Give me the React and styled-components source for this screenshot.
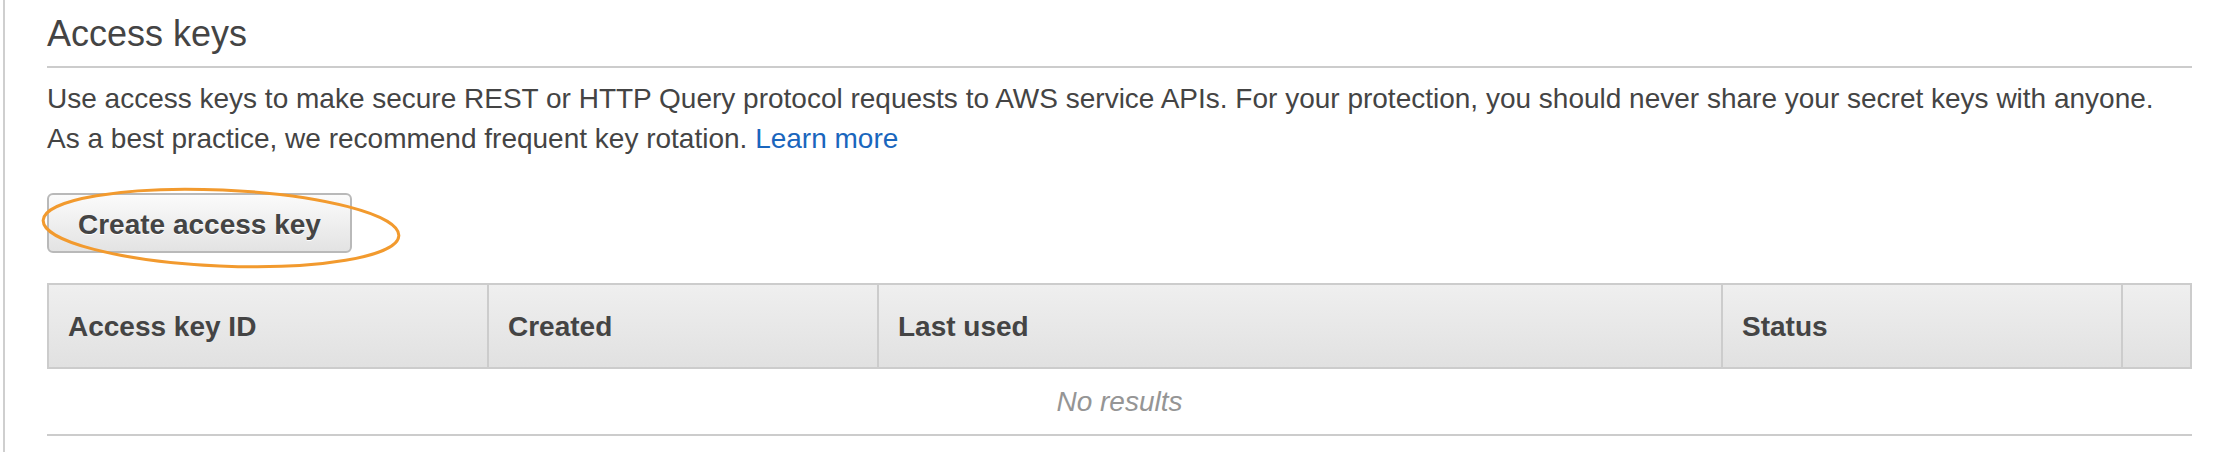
import styled, { createGlobalStyle } from 'styled-components';

const GlobalStyle = createGlobalStyle`
    body {
        margin: 0;
        background: #fff;
        font-family: "Liberation Sans", Arial, Helvetica, sans-serif;
        color: #444;
    }
`;

const columns = ['Access key ID', 'Created', 'Last used', 'Status', ''];

const App = () => {
    return (
    <>
        <GlobalStyle />
        <Page>
            <Heading>Access keys</Heading>
            <Intro>
                Use access keys to make secure REST or HTTP Query protocol requests to AWS service APIs. For your protection, you should never share your secret keys with anyone.
                <br />
                As a best practice, we recommend frequent key rotation. <Link href="#">Learn more</Link>
            </Intro>
            <ButtonWrap>
                <CreateButton type="button">Create access key</CreateButton>
                <Highlight viewBox="0 0 362 82">
                    <ellipse cx="181" cy="41" rx="178" ry="38" transform="rotate(2.5 181 41)" />
                </Highlight>
            </ButtonWrap>
            <Table>
                <HeadRow>
                    {columns.map((c, i) => <HeadCell key={i}>{c}</HeadCell>)}
                </HeadRow>
                <EmptyRow>No results</EmptyRow>
            </Table>
        </Page>
    </>
    )
}

const Page = styled.div`
    margin-left: 3px;
    border-left: 2px solid #cfcfcf;
    min-height: 452px;
    box-sizing: border-box;
    padding: 14px 36px 0 42px;
`;

const Heading = styled.h2`
    margin: 0;
    font-size: 36px;
    font-weight: normal;
    line-height: 40px;
    color: #444;
    padding-bottom: 12px;
    border-bottom: 2px solid #cccccc;
`;

const Intro = styled.p`
    margin: 11px 0 0;
    font-size: 28px;
    line-height: 40px;
    color: #444;
`;

const Link = styled.a`
    color: #1a66bd;
    text-decoration: none;
`;

const ButtonWrap = styled.div`
    position: relative;
    display: inline-block;
    margin-top: 34px;
`;

const CreateButton = styled.button`
    display: block;
    height: 60px;
    box-sizing: border-box;
    padding: 3px 29px 0;
    font-family: "Liberation Sans", Arial, sans-serif;
    font-size: 28px;
    font-weight: bold;
    line-height: 53px;
    color: #444;
    text-shadow: 0 1px 0 #fff;
    background: linear-gradient(#fbfbfb, #e3e3e3);
    border: 2px solid #b9b9b9;
    border-radius: 6px;
    cursor: pointer;
`;

const Highlight = styled.svg`
    position: absolute;
    left: -7px;
    top: -6px;
    width: 362px;
    height: 82px;
    overflow: visible;
    pointer-events: none;

    ellipse {
        fill: none;
        stroke: #f29a2e;
        stroke-width: 3;
    }
`;

const Table = styled.div`
    margin-top: 30px;
    border-bottom: 2px solid #cccccc;
`;

const HeadRow = styled.div`
    display: grid;
    grid-template-columns: 438px 390px 844px 400px 1fr;
    border: 2px solid #cccccc;
    background: linear-gradient(#efefef, #e1e1e1);
`;

const HeadCell = styled.div`
    padding: 21px 19px 19px;
    font-size: 28px;
    font-weight: bold;
    line-height: 42px;
    color: #444;

    & + & {
        border-left: 2px solid #cccccc;
    }
`;

const EmptyRow = styled.div`
    padding: 12px 0 11px;
    text-align: center;
    font-size: 28px;
    font-style: italic;
    line-height: 42px;
    color: #959595;
`;

export default App
